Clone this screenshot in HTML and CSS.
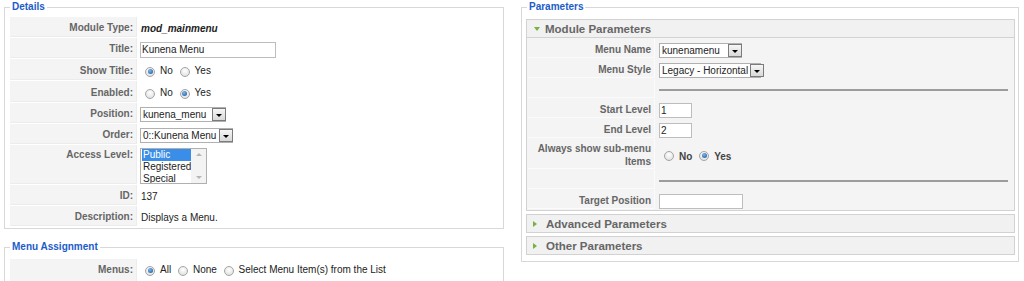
FILE: index.html
```html
<!DOCTYPE html>
<html lang="en">
  <head>
    <meta charset="UTF-8" />
    <title>Module: [Edit]</title>
    <link rel="stylesheet" href="styles.css">
  </head>
  <body>
    <div class="page">
      <!-- left column -->
      <div class="col col-left">
        <fieldset class="adminform">
          <legend>Details</legend>
          <table class="admintable">
            <tr>
              <td class="key">Module Type:</td>
              <td><strong><em>mod_mainmenu</em></strong></td>
            </tr>
            <tr>
              <td class="key">Title:</td>
              <td><input class="text title-input" type="text" value="Kunena Menu" /></td>
            </tr>
            <tr class="radio-row">
              <td class="key">Show Title:</td>
              <td>
                <span class="radio checked"></span><span class="radio-label">No</span>
                <span class="radio"></span><span class="radio-label">Yes</span>
              </td>
            </tr>
            <tr class="radio-row">
              <td class="key">Enabled:</td>
              <td>
                <span class="radio"></span><span class="radio-label">No</span>
                <span class="radio checked"></span><span class="radio-label">Yes</span>
              </td>
            </tr>
            <tr>
              <td class="key">Position:</td>
              <td>
                <span class="select select-position"><span class="select-value">kunena_menu</span><span class="select-btn"></span></span>
              </td>
            </tr>
            <tr>
              <td class="key">Order:</td>
              <td>
                <span class="select select-order"><span class="select-value">0::Kunena Menu</span><span class="select-btn"></span></span>
              </td>
            </tr>
            <tr>
              <td class="key key-top">Access Level:</td>
              <td>
                <div class="listbox">
                  <div class="listbox-options">
                    <div class="listbox-option selected">Public</div>
                    <div class="listbox-option">Registered</div>
                    <div class="listbox-option">Special</div>
                  </div>
                  <div class="listbox-scroll">
                    <span class="scroll-arrow up"></span>
                    <span class="scroll-arrow down"></span>
                  </div>
                </div>
              </td>
            </tr>
            <tr>
              <td class="key">ID:</td>
              <td>137</td>
            </tr>
            <tr>
              <td class="key">Description:</td>
              <td>Displays a Menu.</td>
            </tr>
          </table>
        </fieldset>

        <fieldset class="adminform assignment">
          <legend>Menu Assignment</legend>
          <table class="admintable">
            <tr class="menus-row">
              <td class="key">Menus:</td>
              <td>
                <span class="radio checked"></span><span class="radio-label">All</span>
                <span class="radio"></span><span class="radio-label">None</span>
                <span class="radio"></span><span class="radio-label">Select Menu Item(s) from the List</span>
              </td>
            </tr>
          </table>
        </fieldset>
      </div>

      <!-- right column -->
      <div class="col col-right">
        <fieldset class="adminform params">
          <legend>Parameters</legend>

          <div class="panel">
            <h3 class="toggler open"><span class="arrow-down"></span>Module Parameters</h3>
            <table class="paramlist">
              <tr>
                <td class="paramlist-key">Menu Name</td>
                <td>
                  <span class="select select-menuname"><span class="select-value">kunenamenu</span><span class="select-btn"></span></span>
                </td>
              </tr>
              <tr>
                <td class="paramlist-key">Menu Style</td>
                <td>
                  <span class="select select-menustyle"><span class="select-value">Legacy - Horizontal</span><span class="select-btn"></span></span>
                </td>
              </tr>
              <tr>
                <td class="paramlist-key">&nbsp;</td>
                <td><div class="spacer-line"></div></td>
              </tr>
              <tr>
                <td class="paramlist-key">Start Level</td>
                <td><input class="text level-input" type="text" value="1" /></td>
              </tr>
              <tr>
                <td class="paramlist-key">End Level</td>
                <td><input class="text level-input" type="text" value="2" /></td>
              </tr>
              <tr>
                <td class="paramlist-key two-line">Always show sub-menu Items</td>
                <td>
                  <span class="radio param-radio"></span><span class="radio-label bold">No</span>
                  <span class="radio checked"></span><span class="radio-label bold">Yes</span>
                </td>
              </tr>
              <tr>
                <td class="paramlist-key">&nbsp;</td>
                <td><div class="spacer-line"></div></td>
              </tr>
              <tr>
                <td class="paramlist-key">Target Position</td>
                <td><input class="text target-input" type="text" value="" /></td>
              </tr>
            </table>
          </div>

          <div class="panel">
            <h3 class="toggler"><span class="arrow-right"></span>Advanced Parameters</h3>
          </div>

          <div class="panel">
            <h3 class="toggler"><span class="arrow-right"></span>Other Parameters</h3>
          </div>
        </fieldset>
      </div>
    </div>
  </body>
</html>
```

FILE: styles.css
```css
body {
  margin: 0;
  font-family: "Liberation Sans", Arial, sans-serif;
  font-size: 10px;
  color: #222;
  background-color: #fff;
}

.page {
  display: flex;
  gap: 17px;
  padding-left: 4px;
}

.col-left {
  width: 500px;
}

.col-right {
  width: 498px;
}

fieldset {
  margin: 0;
  padding: 2px 4px 1px;
  border: 1px solid #d8d8d8;
  box-sizing: border-box;
  min-width: 0;
}

legend {
  padding: 0 2px;
  margin-left: 1px;
  font-size: 10px;
  font-weight: bold;
  line-height: 14px;
  color: #1c5cc9;
}

.assignment {
  margin-top: 11px;
  padding-top: 4px;
  padding-bottom: 20px;
}

.params {
  padding: 5px 3px 6px 4px;
}

/* details table */
.admintable {
  width: 100%;
  border-spacing: 1px;
}

.admintable td {
  padding: 3px 3px 0;
  line-height: 16px;
  vertical-align: middle;
  white-space: nowrap;
}

.admintable tr.radio-row td {
  padding-top: 4px;
}

.admintable tr.menus-row td {
  padding: 3px 3px 4px;
}

.admintable td.key {
  width: 120px;
  background-color: #f4f4f4;
  border-bottom: 1px solid #ececec;
  border-right: 1px solid #ececec;
  text-align: right;
  color: #666;
  font-weight: bold;
}

.admintable td.key-top {
  vertical-align: top;
  padding-top: 2px;
}

/* form controls */
.text {
  height: 16px;
  box-sizing: border-box;
  margin: 0;
  padding: 0 1px;
  border: 1px solid #bdbdbd;
  font-family: "Liberation Sans", Arial, sans-serif;
  font-size: 10px;
  color: #222;
  vertical-align: middle;
  background-color: #fff;
}

.title-input {
  width: 136px;
  margin-left: -1px;
}

.level-input {
  width: 33px;
  height: 15px;
}

.target-input {
  width: 84px;
  height: 15px;
}

.select {
  display: inline-flex;
  align-items: center;
  justify-content: space-between;
  gap: 2px;
  height: 15px;
  box-sizing: border-box;
  padding-left: 2px;
  border: 1px solid #b0b0b0;
  background-color: #fff;
  line-height: 13px;
  vertical-align: middle;
  white-space: nowrap;
}

.select-btn {
  display: flex;
  align-items: center;
  justify-content: center;
  flex: none;
  width: 14px;
  height: 13px;
  box-sizing: border-box;
  margin-right: -1px;
  border: 1px solid #7b7b7b;
  background: linear-gradient(#f6f6f6, #d9d9d9);
}

.select-btn::after {
  content: "";
  margin-top: 2px;
  border-left: 3px solid transparent;
  border-right: 3px solid transparent;
  border-top: 3px solid #000;
}

.select-position {
  width: 86px;
  margin-left: -1px;
}

.select-order {
  width: 93px;
  margin-left: -1px;
}

.select-menuname {
  width: 83px;
}

.select-menustyle {
  width: 102px;
}

.listbox {
  display: flex;
  width: 67px;
  height: 36px;
  box-sizing: border-box;
  margin-left: -1px;
  border: 1px solid #b0b0b0;
  background-color: #fff;
  overflow: hidden;
}

.listbox-options {
  flex: 1;
  padding-left: 1px;
  line-height: 12px;
}

.listbox-option {
  padding-left: 1px;
}

.listbox-option.selected {
  background-color: #3a8ee8;
  color: #fff;
}

.listbox-scroll {
  display: flex;
  flex-direction: column;
  justify-content: space-between;
  align-items: center;
  width: 15px;
  padding: 4px 0;
  box-sizing: border-box;
  background-color: #f3f3f3;
}

.scroll-arrow {
  width: 0;
  height: 0;
  border-left: 3px solid transparent;
  border-right: 3px solid transparent;
}

.scroll-arrow.up {
  border-bottom: 3px solid #b5b5b5;
}

.scroll-arrow.down {
  border-top: 3px solid #b5b5b5;
}

.radio {
  display: inline-flex;
  align-items: center;
  justify-content: center;
  width: 10px;
  height: 10px;
  box-sizing: border-box;
  margin: 0 5px 0 4px;
  border: 1px solid #a4a4a4;
  border-radius: 50%;
  background: radial-gradient(circle at 50% 35%, #fff, #dadada);
  vertical-align: middle;
}

.radio.checked::after {
  content: "";
  width: 5px;
  height: 5px;
  border-radius: 50%;
  background: radial-gradient(circle at 40% 35%, #7db8ee, #0f4f99);
}

.radio-label {
  vertical-align: middle;
}

.radio-label.bold {
  font-weight: bold;
  color: #444;
}

.param-radio {
  margin-left: 5px;
}

/* parameter panels */
.panel {
  margin-bottom: 3px;
  border: 1px solid #d2d2d2;
  background-color: #f4f4f4;
}

.panel:last-child {
  margin-bottom: 0;
}

.toggler {
  display: flex;
  align-items: center;
  margin: 0;
  height: 17px;
  padding-top: 1px;
  box-sizing: border-box;
  font-size: 11.5px;
  font-weight: bold;
  color: #666;
  background-color: #f1f1f1;
}

.toggler.open {
  border-bottom: 1px solid #d2d2d2;
  height: 18px;
}

.arrow-down {
  width: 0;
  height: 0;
  margin: 0 5px 0 7px;
  border-left: 3.5px solid transparent;
  border-right: 3.5px solid transparent;
  border-top: 4px solid #77b140;
}

.arrow-right {
  width: 0;
  height: 0;
  margin: 0 9px 0 6px;
  border-top: 3.5px solid transparent;
  border-bottom: 3.5px solid transparent;
  border-left: 4px solid #77b140;
}

.paramlist {
  width: 100%;
  border-spacing: 1px;
}

.paramlist td {
  padding: 3px 3px 0;
  line-height: 15px;
  vertical-align: middle;
}

.paramlist td.paramlist-key {
  width: 120px;
  border-bottom: 1px solid #fbfbfb;
  border-right: 1px solid #fbfbfb;
  text-align: right;
  color: #666;
  font-weight: bold;
}

.paramlist td.two-line {
  line-height: 13px;
}

.spacer-line {
  height: 2px;
  margin-right: 2px;
  background-color: #9c9c9c;
}
```
